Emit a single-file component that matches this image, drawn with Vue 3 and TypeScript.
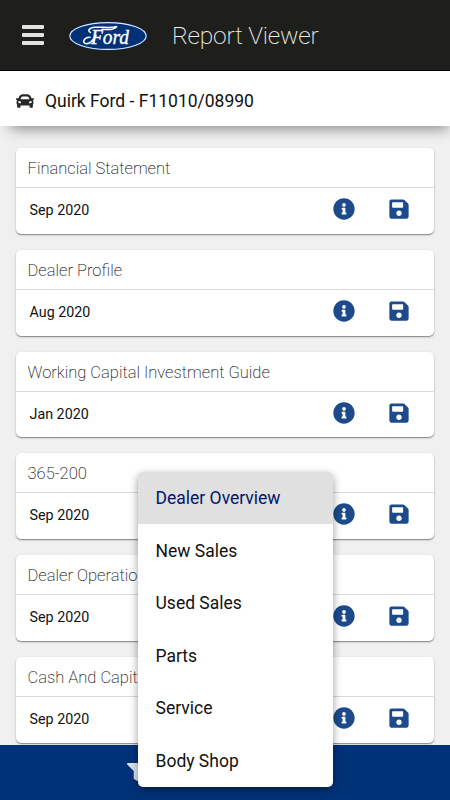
<script setup lang="ts">
interface Report {
  title: string
  period: string
}

const reports: Report[] = [
  { title: 'Financial Statement', period: 'Sep 2020' },
  { title: 'Dealer Profile', period: 'Aug 2020' },
  { title: 'Working Capital Investment Guide', period: 'Jan 2020' },
  { title: '365-200', period: 'Sep 2020' },
  { title: 'Dealer Operations', period: 'Sep 2020' },
  { title: 'Cash And Capital', period: 'Sep 2020' },
]

const menu: string[] = ['Dealer Overview', 'New Sales', 'Used Sales', 'Parts', 'Service', 'Body Shop']
const selected = 'Dealer Overview'
</script>

<template>
  <div class="app">
    <header class="topbar">
      <button class="burger" aria-label="Menu"><i></i><i></i><i></i></button>
      <svg class="logo" viewBox="0 0 80 30">
        <ellipse cx="40" cy="15" rx="39.4" ry="14.6" fill="#002f7d" />
        <ellipse cx="40" cy="15" rx="38.2" ry="13.4" fill="#003076" stroke="#dfe7f5" stroke-width="1.1" />
        <path d="M22.5 11.5C19 10 21 6.6 27 6.2C35 5.7 42 7.7 49 5.4C46 8.6 40 9 34 8.2" fill="none" stroke="#fff" stroke-width="1.5" stroke-linecap="round" />
        <path d="M22 16.2C15 16.5 13.8 22.5 18.5 22.7C23 22.8 25.5 19 28 14.5" fill="none" stroke="#fff" stroke-width="1.6" stroke-linecap="round" />
        <text x="23" y="22.8" textLength="38" lengthAdjust="spacingAndGlyphs">Ford</text>
      </svg>
      <h1>Report Viewer</h1>
    </header>

    <section class="dealer">
      <svg class="car" viewBox="0 0 512 512"><path d="M499.99 176h-59.87l-16.64-41.6C406.38 91.63 365.57 64 319.5 64h-127c-46.06 0-86.88 27.63-103.99 70.4L71.87 176H12.01C4.2 176-1.53 183.34.37 190.91l6 24C7.7 220.25 12.5 224 18.01 224h20.07C24.65 235.73 16 252.78 16 272v48c0 16.12 6.16 30.67 16 41.93V416c0 17.67 14.33 32 32 32h32c17.67 0 32-14.33 32-32v-32h256v32c0 17.67 14.33 32 32 32h32c17.67 0 32-14.33 32-32v-54.07c9.84-11.25 16-25.8 16-41.93v-48c0-19.22-8.65-36.27-22.07-48H494c5.51 0 10.31-3.75 11.64-9.09l6-24c1.89-7.57-3.84-14.91-11.65-14.91zm-352.06-17.83c7.29-18.22 24.94-30.17 44.57-30.17h127c19.63 0 37.28 11.95 44.57 30.17L384 208H128l19.93-49.83zM96 319.8c-19.2 0-32-12.76-32-31.9S76.8 256 96 256s48 28.71 48 47.85-28.8 15.95-48 15.95zm320 0c-19.2 0-48 3.19-48-15.95S396.8 256 416 256s32 12.76 32 31.9-12.8 31.9-32 31.9z" /></svg>
      <span>Quirk Ford - F11010/08990</span>
    </section>

    <main class="reports">
      <article v-for="report in reports" :key="report.title" class="card">
        <h2>{{ report.title }}</h2>
        <div class="row">
          <span class="period">{{ report.period }}</span>
          <svg class="info" viewBox="0 0 512 512"><path d="M256 8C119.043 8 8 119.083 8 256c0 136.997 111.043 248 248 248s248-111.003 248-248C504 119.083 392.957 8 256 8zm0 110c23.196 0 42 18.804 42 42s-18.804 42-42 42-42-18.804-42-42 18.804-42 42-42zm56 254c0 6.627-5.373 12-12 12h-88c-6.627 0-12-5.373-12-12v-24c0-6.627 5.373-12 12-12h12v-64h-12c-6.627 0-12-5.373-12-12v-24c0-6.627 5.373-12 12-12h64c6.627 0 12 5.373 12 12v100h12c6.627 0 12 5.373 12 12v24z" /></svg>
          <svg class="save" viewBox="0 0 448 512"><path d="M433.941 129.941l-83.882-83.882A48 48 0 0 0 316.118 32H48C21.49 32 0 53.49 0 80v352c0 26.51 21.49 48 48 48h352c26.51 0 48-21.49 48-48V163.882a48 48 0 0 0-14.059-33.941zM224 416c-35.346 0-64-28.654-64-64 0-35.346 28.654-64 64-64s64 28.654 64 64c0 35.346-28.654 64-64 64zm96-304.52V212c0 6.627-5.373 12-12 12H76c-6.627 0-12-5.373-12-12V108c0-6.627 5.373-12 12-12h228.52c3.183 0 6.235 1.264 8.485 3.515l3.48 3.48A11.996 11.996 0 0 1 320 111.48z" /></svg>
        </div>
      </article>
    </main>

    <footer class="bottombar">
      <svg class="filter" viewBox="0 0 512 512"><path d="M487.976 0H24.028C2.71 0-8.047 25.866 7.058 40.971L192 225.941V432c0 7.831 3.821 15.17 10.237 19.662l80 55.98C298.02 518.69 320 507.493 320 487.98V225.941l184.947-184.97C520.021 25.896 509.338 0 487.976 0z" /></svg>
    </footer>

    <ul class="menu">
      <li v-for="item in menu" :key="item" :class="{ active: item === selected }">{{ item }}</li>
    </ul>
  </div>
</template>

<style>
body {
  margin: 0;
  overflow: hidden;
}
</style>

<style scoped>
.app {
  position: relative;
  display: flex;
  flex-direction: column;
  height: 800px;
  overflow: hidden;
  background: #f0f0f0;
  font-family: Roboto, 'Liberation Sans', sans-serif;
  color: #111;
}
.topbar {
  flex: none;
  display: flex;
  align-items: center;
  box-sizing: border-box;
  height: 71px;
  padding-left: 22px;
  background: #1e1f1b;
  border-bottom: 1px solid #000;
}
.burger {
  display: flex;
  flex-direction: column;
  gap: 4px;
  width: 22px;
  margin: 0 24px 0 0;
  padding: 0;
  border: 0;
  background: none;
}
.burger i {
  height: 4px;
  border-radius: 1px;
  background: #e2e2e2;
}
.logo {
  width: 80px;
  height: 30px;
  margin: 2px 24px 0 0;
}
.logo text {
  font: italic 400 21px 'Liberation Serif', serif;
  fill: #fff;
  stroke: #fff;
  stroke-width: 0.4;
}
h1 {
  margin: 1px 0 0;
  font-size: 24.5px;
  line-height: 30px;
  font-weight: 200;
  letter-spacing: -0.25px;
  color: #f0f0f0;
}
.dealer {
  flex: none;
  display: flex;
  align-items: center;
  box-sizing: border-box;
  height: 55px;
  padding: 4px 16px 0;
  background: #fff;
  box-shadow: 4px 9px 14px -6px rgba(0, 0, 0, 0.42);
  font-size: 17.5px;
}
.car {
  width: 18px;
  height: 18px;
  margin-right: 11px;
  fill: #262827;
}
.reports {
  flex: 1;
  min-height: 0;
  display: flex;
  flex-direction: column;
  gap: 16px;
  padding: 22px 16px 0;
}
.bottombar {
  position: relative;
}
.card {
  flex: none;
  height: 85.8px;
  border-radius: 5px;
  background: #fff;
  box-shadow: 0 1px 1px rgba(0, 0, 0, 0.35), 0 1px 3px rgba(0, 0, 0, 0.16);
}
h2 {
  box-sizing: border-box;
  height: 40px;
  margin: 0;
  padding: 1px 11.5px 0;
  border-bottom: 1px solid #dadada;
  font-size: 16.5px;
  line-height: 39px;
  font-weight: 200;
}
.row {
  display: flex;
  align-items: center;
  height: 43px;
  padding: 0 25.5px 0 13.5px;
}
.period {
  flex: 1;
  padding-top: 1px;
  font-size: 14.3px;
}
.info,
.save {
  margin-top: -1px;
  fill: #1c4a8b;
}
.info {
  width: 22px;
  height: 22px;
  margin-right: 33.5px;
}
.save {
  width: 20px;
  height: 22px;
}
.bottombar {
  flex: none;
  display: flex;
  height: 55px;
  background: #003278;
}
.filter {
  width: 18px;
  height: 18px;
  margin: 18px 0 0 127px;
  fill: #dbe3ef;
}
.menu {
  position: absolute;
  left: 138px;
  top: 472px;
  width: 195px;
  height: 315px;
  margin: 0;
  padding: 0;
  list-style: none;
  overflow: hidden;
  border-radius: 5px;
  background: #fff;
  box-shadow: 0 3px 9px rgba(0, 0, 0, 0.4);
}
.menu li {
  height: 52.6px;
  padding-left: 17.5px;
  font-size: 17.5px;
  line-height: 52px;
}
.menu .active {
  height: 52px;
  margin-bottom: 0.6px;
  background: #e0e0e0;
  color: #00186d;
}
</style>
